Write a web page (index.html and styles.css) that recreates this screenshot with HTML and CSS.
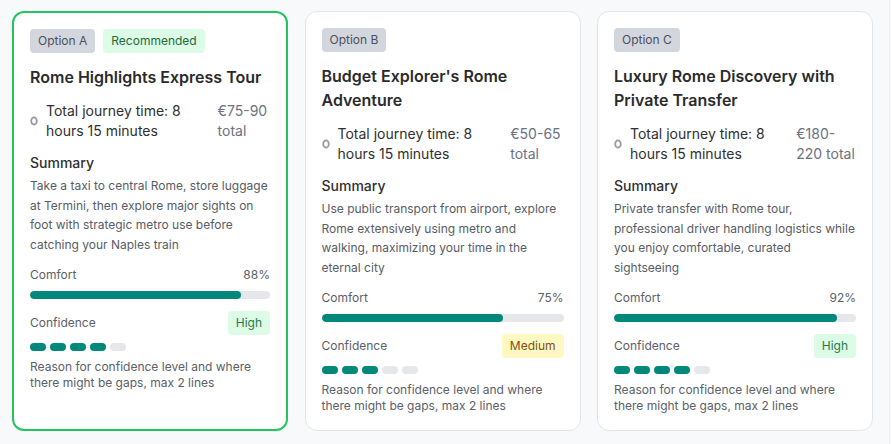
FILE: index.html
```html
<!DOCTYPE html>
<html lang="en">
<head>
<meta charset="utf-8">
<title>Rome options</title>
<link rel="stylesheet" href="styles.css">
</head>
<body>
<div class="page">
  <div class="cards">
    <article class="card card--recommended">
      <div class="tags">
        <span class="tag tag--option">Option A</span>
        <span class="tag tag--rec">Recommended</span>
      </div>
      <h2 class="title">Rome Highlights Express Tour</h2>
      <div class="journey">
        <svg class="clock" width="8" height="10" viewBox="0 0 8 10"><ellipse cx="4" cy="5" rx="2.8" ry="3.6" fill="none" stroke="#979ba6" stroke-width="1.8"/></svg>
        <span class="journey-time">Total journey time: 8 hours 15 minutes</span>
        <span class="price">€75-90 total</span>
      </div>
      <h3 class="section-title">Summary</h3>
      <p class="summary">Take a taxi to central Rome, store luggage at Termini, then explore major sights on foot with strategic metro use before catching your Naples train</p>
      <div class="metric">
        <span>Comfort</span><span>88%</span>
      </div>
      <div class="bar"><div class="bar-fill" style="width:88%"></div></div>
      <div class="confidence">
        <span>Confidence</span><span class="level level--high">High</span>
      </div>
      <div class="dots">
        <span class="dot on"></span><span class="dot on"></span><span class="dot on"></span><span class="dot on"></span><span class="dot"></span>
      </div>
      <p class="reason">Reason for confidence level and where there might be gaps, max 2 lines</p>
    </article>

    <article class="card">
      <div class="tags">
        <span class="tag tag--option">Option B</span>
      </div>
      <h2 class="title">Budget Explorer's Rome Adventure</h2>
      <div class="journey">
        <svg class="clock" width="8" height="10" viewBox="0 0 8 10"><ellipse cx="4" cy="5" rx="2.8" ry="3.6" fill="none" stroke="#979ba6" stroke-width="1.8"/></svg>
        <span class="journey-time">Total journey time: 8 hours 15 minutes</span>
        <span class="price">€50-65 total</span>
      </div>
      <h3 class="section-title">Summary</h3>
      <p class="summary">Use public transport from airport, explore Rome extensively using metro and walking, maximizing your time in the eternal city</p>
      <div class="metric">
        <span>Comfort</span><span>75%</span>
      </div>
      <div class="bar"><div class="bar-fill" style="width:75%"></div></div>
      <div class="confidence">
        <span>Confidence</span><span class="level level--medium">Medium</span>
      </div>
      <div class="dots">
        <span class="dot on"></span><span class="dot on"></span><span class="dot on"></span><span class="dot"></span><span class="dot"></span>
      </div>
      <p class="reason">Reason for confidence level and where there might be gaps, max 2 lines</p>
    </article>

    <article class="card">
      <div class="tags">
        <span class="tag tag--option">Option C</span>
      </div>
      <h2 class="title">Luxury Rome Discovery with Private Transfer</h2>
      <div class="journey">
        <svg class="clock" width="8" height="10" viewBox="0 0 8 10"><ellipse cx="4" cy="5" rx="2.8" ry="3.6" fill="none" stroke="#979ba6" stroke-width="1.8"/></svg>
        <span class="journey-time">Total journey time: 8 hours 15 minutes</span>
        <span class="price">€180-220 total</span>
      </div>
      <h3 class="section-title">Summary</h3>
      <p class="summary">Private transfer with Rome tour, professional driver handling logistics while you enjoy comfortable, curated sightseeing</p>
      <div class="metric">
        <span>Comfort</span><span>92%</span>
      </div>
      <div class="bar"><div class="bar-fill" style="width:92%"></div></div>
      <div class="confidence">
        <span>Confidence</span><span class="level level--high">High</span>
      </div>
      <div class="dots">
        <span class="dot on"></span><span class="dot on"></span><span class="dot on"></span><span class="dot on"></span><span class="dot"></span>
      </div>
      <p class="reason">Reason for confidence level and where there might be gaps, max 2 lines</p>
    </article>
  </div>
</div>
</body>
</html>
```

FILE: styles.css
```css
* { box-sizing: border-box; }

html, body {
  margin: 0;
  padding: 0;
  background: #f8f9fb;
  font-family: Inter, "Noto Sans", sans-serif;
  color: #2b2b2b;
}

.page {
  width: 890px;
  min-height: 444px;
  border-right: 1px solid #eceef2;
  padding: 11px 0 0 12px;
}

.cards {
  display: grid;
  grid-template-columns: repeat(3, 276px);
  column-gap: 16.5px;
  align-items: stretch;
}

.card {
  background: #ffffff;
  border: 1px solid #e3e5e9;
  border-radius: 12px;
  padding: 16px;
  display: flex;
  flex-direction: column;
}

.card--recommended {
  border: 2px solid #22c55e;
}

.tags {
  display: flex;
  gap: 8px;
}

.tag {
  font-size: 12px;
  line-height: 16px;
  padding: 4px 8px;
  border-radius: 4px;
}

.tag--option {
  background: #d4d6dd;
  color: #4b5060;
}

.tag--rec {
  background: #dcfce7;
  color: #1e6b3b;
}

.title {
  margin: 12px 0 0;
  font-size: 16px;
  line-height: 24px;
  font-weight: 600;
  color: #2b2b2b;
}

.journey {
  margin-top: 12px;
  display: flex;
  align-items: center;
  gap: 12px;
  font-size: 14px;
  line-height: 20px;
}

.clock {
  flex-shrink: 0;
  margin-right: -4px;
}

.journey-time {
  color: #2f2f2f;
}

.price {
  color: #6b7280;
}

.section-title {
  margin: 12px 0 0;
  font-size: 14px;
  line-height: 20px;
  font-weight: 500;
  color: #2f2f2f;
}

.summary {
  margin: 3px 0 0;
  font-size: 12px;
  line-height: 19.6px;
  color: #585c64;
}

.metric,
.confidence {
  display: flex;
  justify-content: space-between;
  align-items: center;
  font-size: 12px;
  line-height: 20px;
  color: #5b6069;
}

.metric {
  margin-top: 11px;
}

.bar {
  margin-top: 6px;
  height: 8px;
  border-radius: 4px;
  background: #e5e7eb;
  overflow: hidden;
}

.bar-fill {
  height: 100%;
  background: #00897b;
  border-radius: 4px;
}

.confidence {
  margin-top: 12px;
}

.level {
  font-size: 12px;
  line-height: 16px;
  padding: 4px 8px;
  border-radius: 4px;
}

.level--high {
  background: #dcfce7;
  color: #2b7a4b;
}

.level--medium {
  background: #fef9c3;
  color: #854d0e;
}

.dots {
  margin-top: 8px;
  display: flex;
  gap: 4px;
}

.dot {
  width: 16px;
  height: 8px;
  border-radius: 4px;
  background: #e5e7eb;
}

.dot.on {
  background: #00897b;
}

.reason {
  margin: 8px 0 0;
  font-size: 12px;
  line-height: 16px;
  color: #5b6069;
}
```
